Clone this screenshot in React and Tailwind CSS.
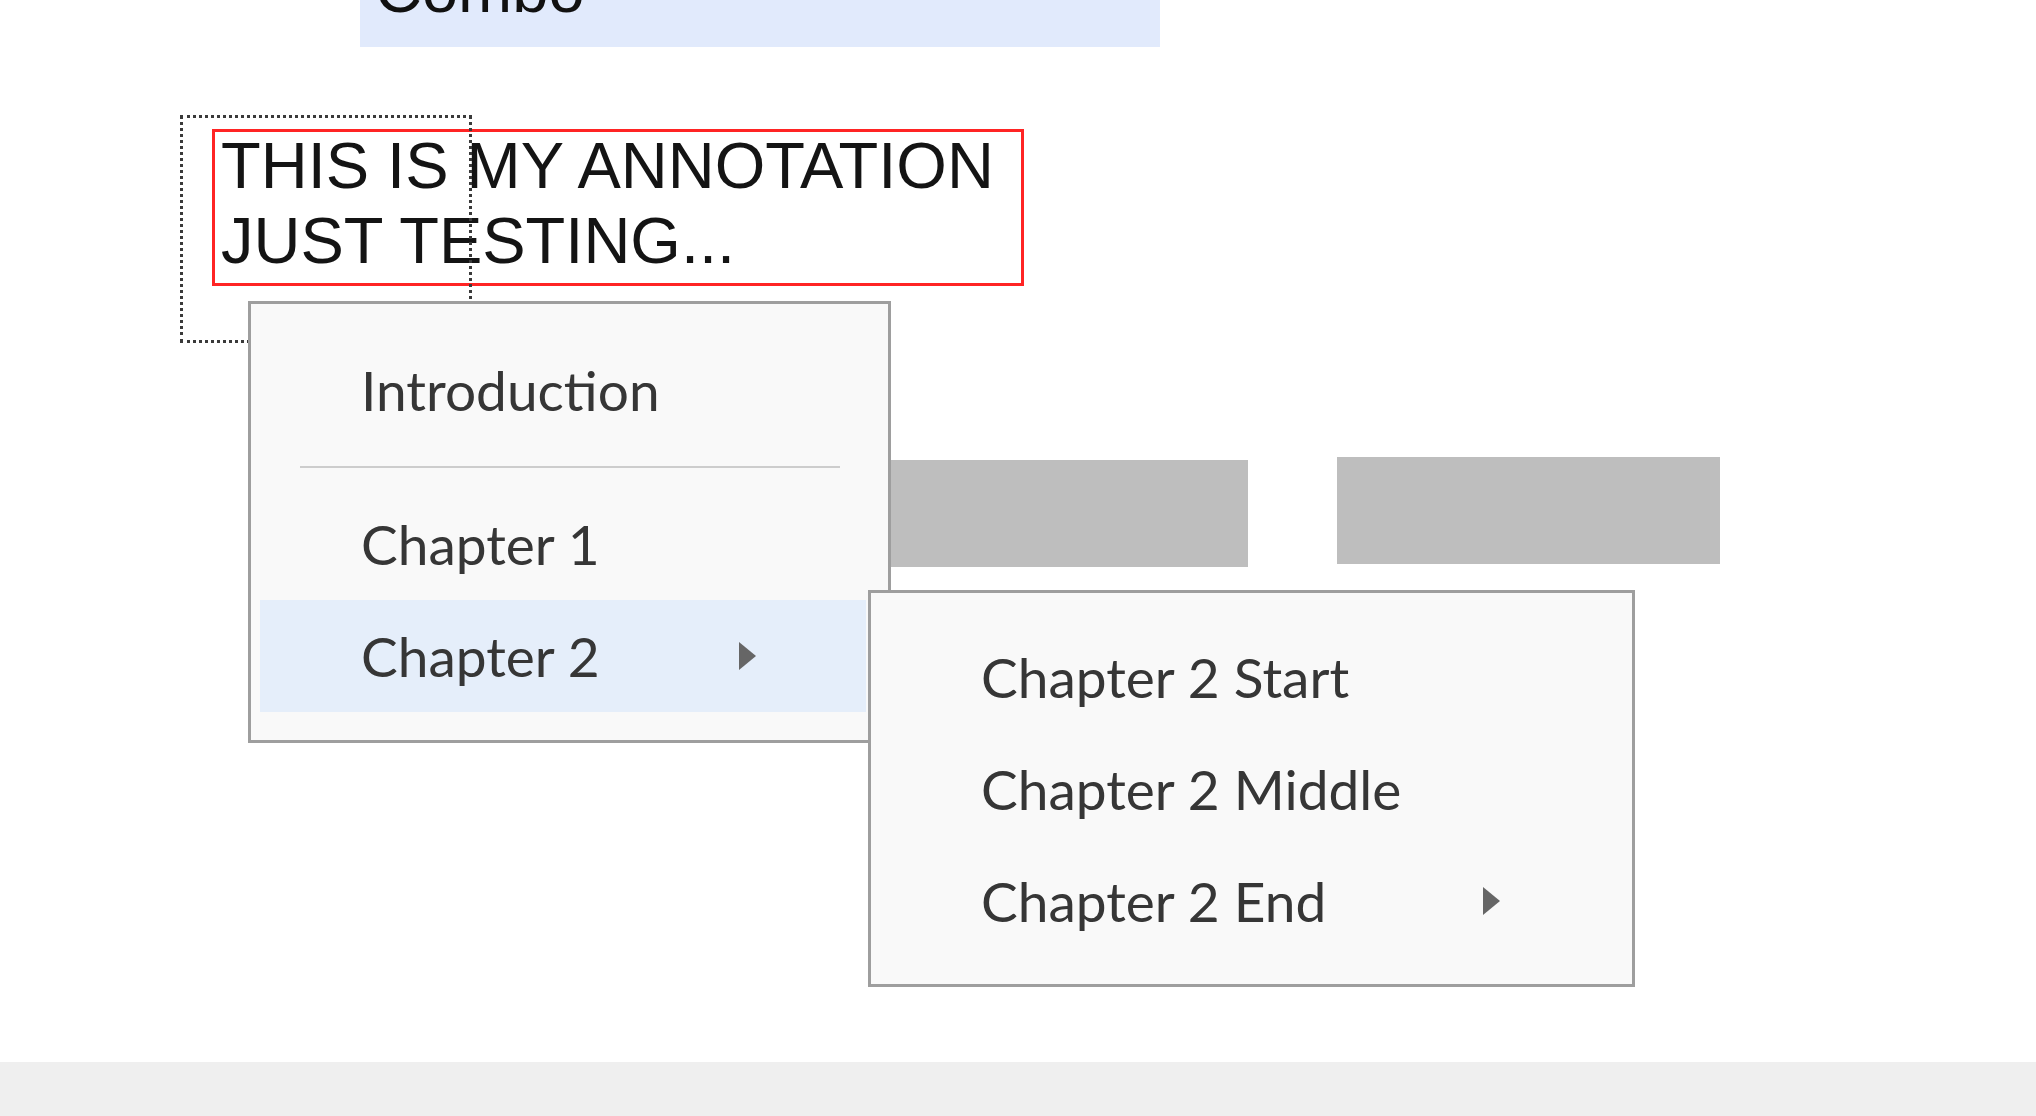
import React from 'react';

const menuFont = { fontFamily: 'Lato, "Noto Sans", sans-serif' };
const boxFont = { fontFamily: '"Liberation Sans", Arial, sans-serif' };

function Arrow() {
  return (
    <span className="block w-0 h-0 border-y-[14px] border-y-transparent border-l-[17px] border-l-[#666666]" />
  );
}

function MenuItem({ label, sub, active }) {
  return (
    <div
      className={`h-[112px] flex items-center justify-between pl-[101px] pr-[110px] text-[55px] text-[#363636] ${
        active ? 'bg-[#e5eefa]' : ''
      }`}
    >
      <span className="whitespace-nowrap">{label}</span>
      {sub && <Arrow />}
    </div>
  );
}

export default function App() {
  return (
    <div className="h-screen w-full flex flex-col bg-white overflow-hidden">
      {/* canvas */}
      <div className="relative flex-1 overflow-hidden">
        {/* combo field, scrolled mostly out of view */}
        <div className="absolute left-[360px] top-0 w-[800px] h-[47px] bg-[#e1eafc] overflow-hidden">
          <div className="pl-[15px] mt-[-42px] text-[65px] leading-[64px] text-[#111]" style={boxFont}>
            Combo
          </div>
        </div>

        {/* grey shapes */}
        <div className="absolute left-[640px] top-[460px] w-[608px] h-[107px] bg-[#bebebe]" />
        <div className="absolute left-[1337px] top-[457px] w-[383px] h-[107px] bg-[#bebebe]" />

        {/* annotation */}
        <div className="absolute left-[212px] top-[129px] w-[812px] h-[157px] border-[3px] border-[#ff2424] overflow-hidden">
          <div className="pl-[6px] mt-[-4px] text-[65px] leading-[75px] text-[#141414] whitespace-nowrap" style={boxFont}>
            <div>THIS IS MY ANNOTATION</div>
            <div>JUST TESTING...</div>
          </div>
        </div>

        {/* selection outline */}
        <div className="absolute left-[180px] top-[115px] w-[292px] h-[228px] border-[3px] border-dotted border-[#3a3a3a]" />

        {/* context menu */}
        <div
          className="absolute left-[248px] top-[301px] w-[643px] border-[3px] border-[#9e9e9e] bg-[#f9f9f9] pt-[30px] pb-[28px] pl-[9px] pr-[22px]"
          style={menuFont}
        >
          <MenuItem label="Introduction" />
          <div className="h-[42px] flex items-center pl-[40px] pr-[26px]">
            <div className="h-[2px] w-full bg-[#cdcdcd]" />
          </div>
          <MenuItem label="Chapter 1" />
          <MenuItem label="Chapter 2" sub active />
        </div>

        {/* submenu */}
        <div
          className="absolute left-[868px] top-[590px] w-[767px] border-[3px] border-[#9e9e9e] bg-[#f9f9f9] pt-[28px] pb-[27px] pl-[9px] pr-[22px]"
          style={menuFont}
        >
          <MenuItem label="Chapter 2 Start" />
          <MenuItem label="Chapter 2 Middle" />
          <MenuItem label="Chapter 2 End" sub />
        </div>
      </div>

      {/* footer bar */}
      <div className="h-[54px] shrink-0 bg-[#efefef]" />
    </div>
  );
}
